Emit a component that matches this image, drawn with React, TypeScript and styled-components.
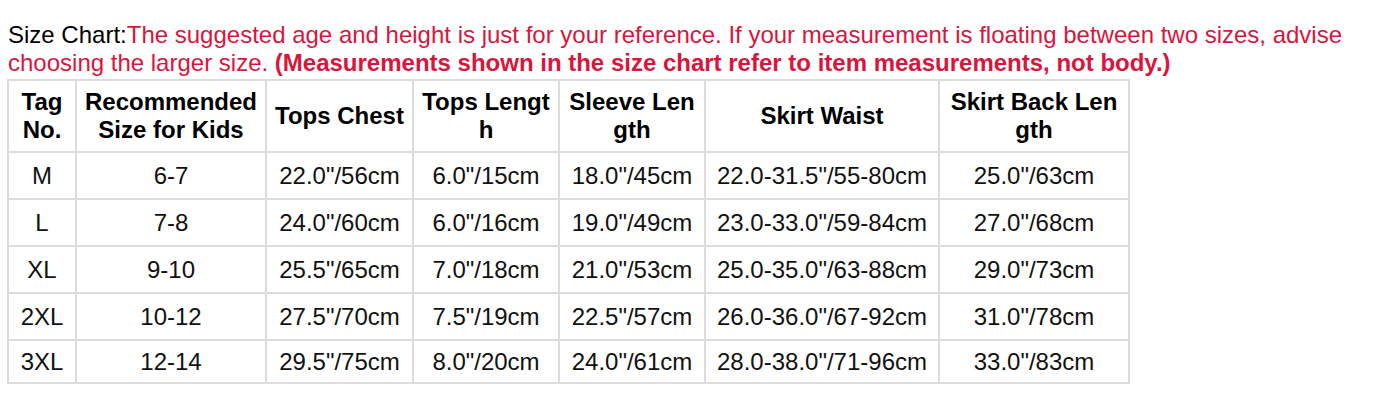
import React from "react";
import styled, { createGlobalStyle } from "styled-components";

const Global = createGlobalStyle`
  html, body { margin: 0; padding: 0; background: #fff; }
  body { font-family: "Liberation Sans", Arial, sans-serif; }
`;

const Page = styled.div`
  padding: 21px 8px 0 7px;
  font-family: "Liberation Sans", Arial, sans-serif;
  font-size: 24px;
  color: #000;
`;

const Intro = styled.p`
  margin: 0 0 2px 1px;
  line-height: normal;
`;

const Red = styled.span<{ $bold?: boolean }>`
  color: #dc143c;
  font-weight: ${(p) => (p.$bold ? 700 : 400)};
`;

const Table = styled.table`
  border-collapse: collapse;
  table-layout: fixed;
  border: 2px solid #dcdcdc;
`;

const Th = styled.th`
  border: 2px solid #dcdcdc;
  font-weight: 700;
  font-size: 24px;
  line-height: 28px;
  height: 70px;
  padding: 0 6px;
  text-align: center;
  vertical-align: middle;
  word-break: break-all;
  color: #000;
`;

const Td = styled.td<{ $h: number }>`
  border: 2px solid #dcdcdc;
  font-size: 24px;
  height: ${(p) => p.$h}px;
  padding: 0 6px;
  text-align: center;
  vertical-align: middle;
  color: #111;
  white-space: nowrap;
`;

const widths = [68, 190, 147, 146, 146, 234, 190];
const headers = [
  "Tag No.",
  "Recommended Size for Kids",
  "Tops Chest",
  "Tops Length",
  "Sleeve Length",
  "Skirt Waist",
  "Skirt Back Length",
];
const rows = [
  ["M", "6-7", "22.0\"/56cm", "6.0\"/15cm", "18.0\"/45cm", "22.0-31.5\"/55-80cm", "25.0\"/63cm"],
  ["L", "7-8", "24.0\"/60cm", "6.0\"/16cm", "19.0\"/49cm", "23.0-33.0\"/59-84cm", "27.0\"/68cm"],
  ["XL", "9-10", "25.5\"/65cm", "7.0\"/18cm", "21.0\"/53cm", "25.0-35.0\"/63-88cm", "29.0\"/73cm"],
  ["2XL", "10-12", "27.5\"/70cm", "7.5\"/19cm", "22.5\"/57cm", "26.0-36.0\"/67-92cm", "31.0\"/78cm"],
  ["3XL", "12-14", "29.5\"/75cm", "8.0\"/20cm", "24.0\"/61cm", "28.0-38.0\"/71-96cm", "33.0\"/83cm"],
];
const heights = [45, 45, 45, 45, 41];

export default function App() {
  return (
    <>
      <Global />
      <Page>
        <Intro>
          Size Chart:
          <Red>
            The suggested age and height is just for your reference. If your measurement is floating between two sizes, advise choosing the larger size.{" "}
          </Red>
          <Red $bold>(Measurements shown in the size chart refer to item measurements, not body.)</Red>
        </Intro>
        <Table>
          <colgroup>
            {widths.map((w, i) => (
              <col key={i} style={{ width: w }} />
            ))}
          </colgroup>
          <thead>
            <tr>
              {headers.map((h) => (
                <Th key={h}>{h}</Th>
              ))}
            </tr>
          </thead>
          <tbody>
            {rows.map((r, i) => (
              <tr key={i}>
                {r.map((c, j) => (
                  <Td key={j} $h={heights[i]}>
                    {c}
                  </Td>
                ))}
              </tr>
            ))}
          </tbody>
        </Table>
      </Page>
    </>
  );
}
